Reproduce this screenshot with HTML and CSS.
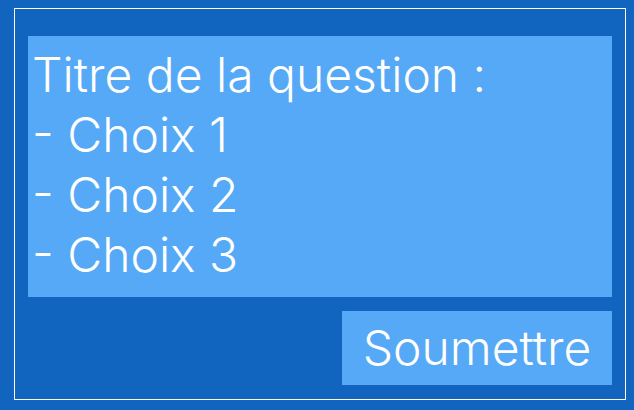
FILE: index.html
```html
<!DOCTYPE html>
<html lang="fr">
<head>
<meta charset="utf-8">
<link rel="stylesheet" href="styles.css">
</head>
<body>
<div class="frame">
  <div class="question">
    <div class="line">Titre de la question :</div>
    <div class="line">- Choix 1</div>
    <div class="line">- Choix 2</div>
    <div class="line">- Choix 3</div>
  </div>
  <div class="actions">
    <button class="submit">Soumettre</button>
  </div>
</div>
</body>
</html>
```
FILE: styles.css
```css
html, body {
  margin: 0;
  padding: 0;
  background: #1265bf;
  width: 634px;
  height: 410px;
  overflow: hidden;
}
body {
  padding: 8px 8px 0 14px;
  box-sizing: border-box;
  font-family: "Inter", "Liberation Sans", sans-serif;
  font-weight: 300;
  color: #ffffff;
}
.frame {
  width: 612px;
  height: 392px;
  box-sizing: border-box;
  border: 1px solid #ffffff;
  padding: 27px 13px 14px 13px;
  display: flex;
  flex-direction: column;
  gap: 14px;
}
.question {
  background: #56a9f6;
  height: 261px;
  box-sizing: border-box;
  padding: 9px 4px 0 4px;
}
.line {
  font-size: 48px;
  line-height: 60px;
  white-space: nowrap;
}
.actions {
  display: flex;
  justify-content: flex-end;
}
.submit {
  width: 270px;
  height: 74px;
  background: #56a9f6;
  border: none;
  padding: 0 0 2px 0;
  margin: 0;
  color: #ffffff;
  font-family: inherit;
  font-weight: 300;
  font-size: 48px;
}
```
